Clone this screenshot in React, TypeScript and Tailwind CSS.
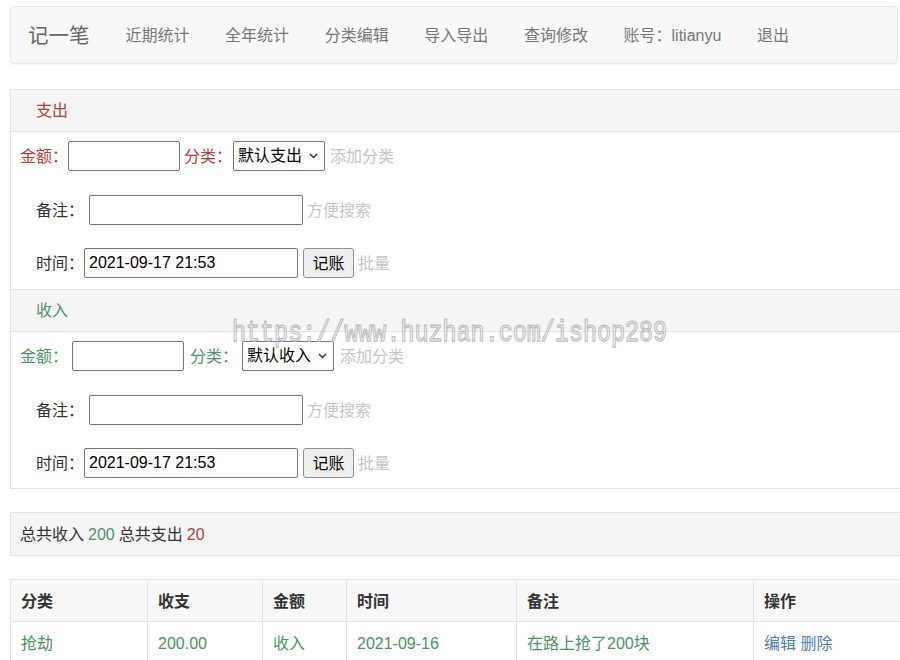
import React from "react";

const RED = "text-[#b3403e]";
const GREEN = "text-[#4b9464]";

function Chevron() {
  return (
    <svg width="9" height="6" viewBox="0 0 9 6" className="shrink-0">
      <polyline points="1,1 4.5,4.5 8,1" fill="none" stroke="#333" strokeWidth="1.5" />
    </svg>
  );
}

function TextInput({ w, value = "", ml = "" }: { w: string; value?: string; ml?: string }) {
  return (
    <div
      className={`${w} ${ml} flex h-[30px] shrink-0 items-center rounded-[2px] border border-[#767676] bg-white pl-[4px] text-[16px] text-black`}
    >
      {value}
    </div>
  );
}

function FakeSelect({ label, ml }: { label: string; ml: string }) {
  return (
    <div
      className={`${ml} flex h-[30px] w-[92px] shrink-0 items-center justify-between rounded-[2px] border border-[#767676] bg-white pl-[4px] pr-[6px] text-black`}
    >
      <span>{label}</span>
      <Chevron />
    </div>
  );
}

function Section({
  title,
  color,
  selectLabel,
  r1,
  last,
}: {
  title: string;
  color: string;
  selectLabel: string;
  r1: { inputMl: string; catMl: string; selMl: string; addMl: string };
  last?: boolean;
}) {
  return (
    <>
      <div className={`flex h-[42px] items-center border-b border-[#e3e3e3] bg-[#f5f5f5] pl-[25px] pt-[1px] ${color}`}>
        {title}
      </div>
      <div className={`flex flex-col pl-[9px] pt-[9px] ${last ? "pb-[10px]" : "pb-[11px] border-b border-[#e3e3e3]"}`}>
        <div className="flex h-[30px] items-center">
          <span className={`pt-[2px] ${color}`}>金额：</span>
          <TextInput w="w-[112px]" ml={r1.inputMl} />
          <span className={`pt-[2px] ${r1.catMl} ${color}`}>分类：</span>
          <FakeSelect label={selectLabel} ml={r1.selMl} />
          <span className={`pt-[2px] ${r1.addMl} text-[#c4c4c4]`}>添加分类</span>
        </div>
        <div className="mt-[24px] flex h-[30px] items-center pl-[16px]">
          <span className="pt-[2px]">备注：</span>
          <TextInput w="w-[214px]" ml="ml-[5px]" />
          <span className="ml-[4px] pt-[2px] text-[#c4c4c4]">方便搜索</span>
        </div>
        <div className="mt-[23px] flex h-[30px] items-center pl-[16px]">
          <span className="pt-[2px]">时间：</span>
          <TextInput w="w-[214px]" value="2021-09-17 21:53" />
          <button className="ml-[5px] flex h-[30px] w-[51px] items-center justify-center rounded-[3px] border border-[#8f8f8f] bg-[#efefef] pt-[1px] text-black">
            记账
          </button>
          <span className="ml-[4px] pt-[2px] text-[#c4c4c4]">批量</span>
        </div>
      </div>
    </>
  );
}

export default function App() {
  const links = ["近期统计", "全年统计", "分类编辑", "导入导出", "查询修改", "账号：litianyu", "退出"];
  const cols = ["分类", "收支", "金额", "时间", "备注", "操作"];
  const widths = ["w-[137px]", "w-[115px]", "w-[84px]", "w-[170px]", "w-[237px]", "w-[157px]"];
  const row = ["抢劫", "200.00", "收入", "2021-09-16", "在路上抢了200块"];
  return (
    <div className="relative h-[660px] w-[900px] overflow-hidden bg-white text-[16px] leading-normal text-[#333] font-['Liberation_Sans','Noto_Sans_CJK_SC',sans-serif]">
      <div className="pl-[10px] pr-[2px] pt-[6px]">
        <nav className="flex h-[58px] items-center rounded-[4px] border border-[#e7e7e7] bg-[#f8f8f8] pl-[17px] pt-[2px] shadow-[0_1px_1px_rgba(0,0,0,0.04)]">
          <span className="text-[20.5px] text-[#666]">记一笔</span>
          <div className="ml-[36px] flex gap-[35.6px] text-[#777]">
            {links.map((l) => (
              <span key={l}>{l}</span>
            ))}
          </div>
        </nav>
      </div>

      <div className="ml-[10px] mt-[25px] w-[900px] border border-[#e3e3e3]">
        <Section
          title="支出"
          color={RED}
          selectLabel="默认支出"
          r1={{ inputMl: "ml-0", catMl: "ml-[4px]", selMl: "ml-[1px]", addMl: "ml-[5px]" }}
        />
        <Section
          title="收入"
          color={GREEN}
          selectLabel="默认收入"
          r1={{ inputMl: "ml-[4px]", catMl: "ml-[6px]", selMl: "ml-[4px]", addMl: "ml-[6px]" }}
          last
        />
      </div>

      <div className="ml-[10px] mt-[23px] flex h-[44px] w-[900px] items-center border border-[#e3e3e3] bg-[#f5f5f5] pl-[9px] pt-[2px]">
        <span>总共收入</span>
        <span className={`ml-[4px] ${GREEN}`}>200</span>
        <span className="ml-[4px]">总共支出</span>
        <span className={`ml-[4px] ${RED}`}>20</span>
      </div>

      <table className="ml-[10px] mt-[23px] w-[900px] table-fixed border-collapse">
        <thead>
          <tr className="h-[42px] bg-[#f8f8f8]">
            {cols.map((c, i) => (
              <th
                key={c}
                className={`${widths[i]} border border-[#e3e3e3] pl-[10px] pt-[2px] text-left font-bold text-[#333]`}
              >
                {c}
              </th>
            ))}
          </tr>
        </thead>
        <tbody>
          <tr className="h-[42px]">
            {row.map((c, i) => (
              <td key={i} className={`border border-[#e3e3e3] pl-[10px] pt-[2px] ${GREEN}`}>
                {c}
              </td>
            ))}
            <td className="border border-[#e3e3e3] pl-[10px] pt-[2px] text-[#4f7db5]">编辑 删除</td>
          </tr>
        </tbody>
      </table>

      <div className="pointer-events-none absolute left-[232px] top-[320px] origin-top-left scale-y-[1.25] whitespace-nowrap font-['Liberation_Mono',monospace] text-[23.4px] leading-none text-transparent [-webkit-text-stroke:1px_#bdbdbd]">
        https://www.huzhan.com/ishop289
      </div>
    </div>
  );
}
